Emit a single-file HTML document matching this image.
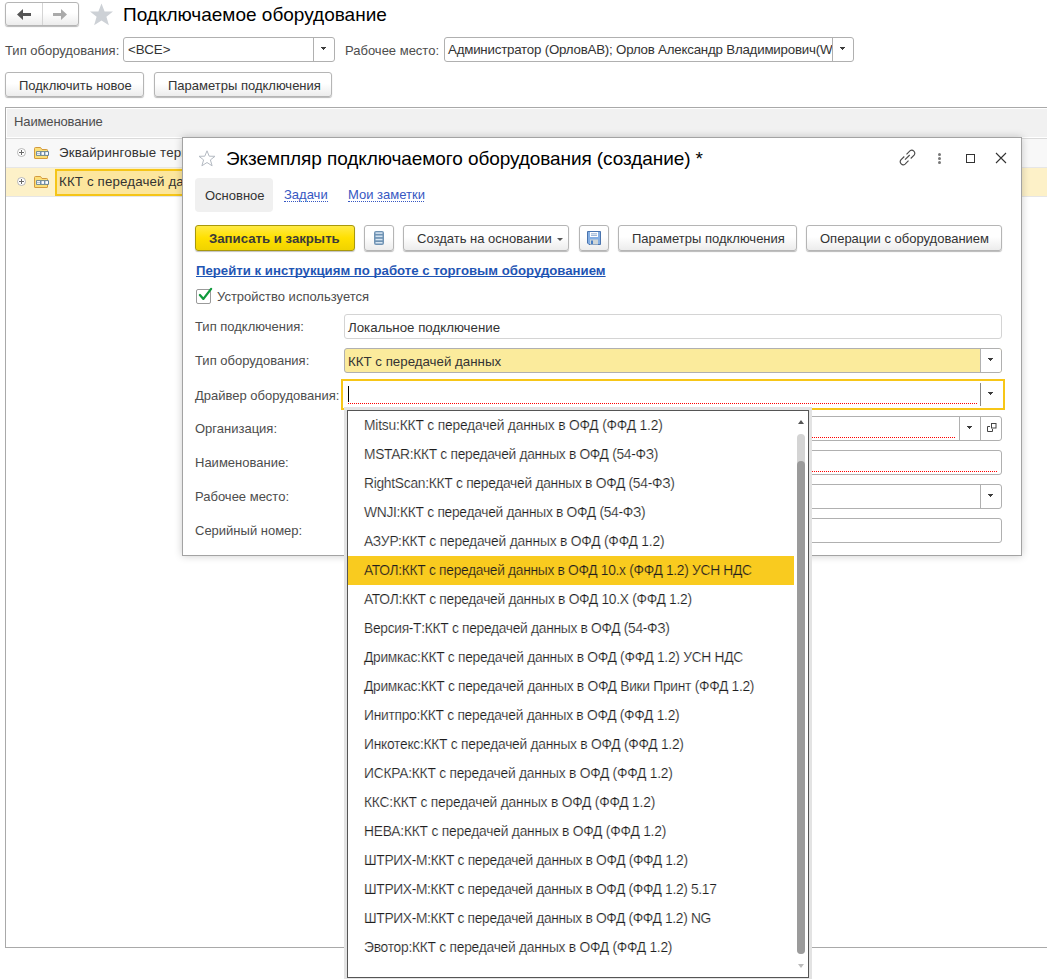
<!DOCTYPE html>
<html><head><meta charset="utf-8">
<style>
*{box-sizing:border-box;margin:0;padding:0}
html,body{width:1047px;height:979px;overflow:hidden;background:#fff;font-family:"Liberation Sans",sans-serif;color:#4d4d4d}
.a{position:absolute}
.t{position:absolute;white-space:nowrap;line-height:1}
.btn{position:absolute;border:1px solid #b5b5b5;border-radius:3px;background:linear-gradient(#fff 0%,#fff 45%,#ececec 100%);box-shadow:0 1px 1px rgba(0,0,0,.28)}
.fld{position:absolute;border:1px solid #b0b0b0;border-radius:3px;background:#fff}
.sep{position:absolute;top:0;bottom:0;width:1px;background:#b0b0b0}
.tri{position:absolute;width:0;height:0;border-left:4px solid transparent;border-right:4px solid transparent;border-top:4px solid #444}
.lbl{font-size:13px;color:#4d4d4d}
.bt{font-size:13px;color:#333}
.li{font-size:13.8px;letter-spacing:-0.2px;color:#1e1e1e;-webkit-text-stroke:0.18px #fff}
</style></head><body>

<!-- ============ PAGE HEADER ============ -->
<div class="btn" style="left:5px;top:2px;width:74px;height:24px"></div>
<div class="a" style="left:42px;top:3px;width:1px;height:22px;background:#d4d4d4"></div>
<svg class="a" style="left:17px;top:9px" width="15" height="12" viewBox="0 0 15 12"><path d="M0 5.5 L6 0 V4 H14 V7 H6 V11 Z" fill="#555"/></svg>
<svg class="a" style="left:53px;top:9px" width="15" height="12" viewBox="0 0 15 12"><path d="M14 5.5 L8 0 V4 H0 V7 H8 V11 Z" fill="#aaa"/></svg>

<svg class="a" style="left:89px;top:3px" width="25" height="23" viewBox="0 0 25 23"><polygon points="12.5,0.5 15.6,8.4 24,8.6 17.4,13.8 19.9,22.3 12.5,17.5 5.1,22.3 7.6,13.8 1,8.6 9.4,8.4" fill="#cdd1d6"/></svg>
<div class="t" style="left:123px;top:5px;font-size:19px;color:#000">Подключаемое оборудование</div>

<!-- filter row -->
<div class="t lbl" style="left:5px;top:44px">Тип оборудования:</div>
<div class="fld" style="left:123px;top:37px;width:212px;height:25px">
  <div class="t" style="left:4px;top:5px;font-size:13.3px;color:#333">&lt;ВСЕ&gt;</div>
  <div class="sep" style="left:189px"></div>
  <svg class="a" style="left:197px;top:9px" width="5" height="3" viewBox="0 0 5 3"><path d="M0 0H5V1H4V2H3V3H2V2H1V1H0Z" fill="#3c3c3c"/></svg>
</div>

<div class="t lbl" style="left:345px;top:44px">Рабочее место:</div>
<div class="fld" style="left:444px;top:37px;width:410px;height:25px;overflow:hidden">
  <div class="a" style="left:0;top:0;width:387px;height:23px;overflow:hidden">
    <div class="t" style="left:3px;top:5px;font-size:13.3px;letter-spacing:-0.21px;color:#333">Администратор (ОрловАВ); Орлов Александр Владимирович(WS)</div>
  </div>
  <div class="sep" style="left:387px"></div>
  <svg class="a" style="left:395px;top:9px" width="5" height="3" viewBox="0 0 5 3"><path d="M0 0H5V1H4V2H3V3H2V2H1V1H0Z" fill="#3c3c3c"/></svg>
</div>

<!-- buttons row -->
<div class="btn" style="left:5px;top:72px;width:139px;height:25px"><div class="t bt" style="left:13px;top:6px">Подключить новое</div></div>
<div class="btn" style="left:154px;top:72px;width:178px;height:25px"><div class="t bt" style="left:13px;top:6px">Параметры подключения</div></div>

<!-- ============ TABLE ============ -->
<div class="a" style="left:5px;top:107px;width:1100px;height:841px;border:1px solid #a9a9a9;background:#fff">
  <div class="a" style="left:1px;top:1px;width:1100px;height:28px;background:#f1f1f1"></div>
  <div class="a" style="left:0;top:30px;width:1100px;height:1px;background:#dadada"></div>
  <div class="t lbl" style="left:8px;top:7px;letter-spacing:-0.12px;color:#4d4d4d">Наименование</div>
  <!-- row1 -->
  <div class="a" style="left:0;top:31px;width:1100px;height:28px;background:#f8f8f8"></div>
  <div class="a" style="left:0;top:59px;width:1100px;height:1px;background:#e6e6e6"></div>
  <!-- row2 -->
  <div class="a" style="left:0;top:60px;width:1100px;height:28px;background:#fdf1c8"></div>
  <div class="a" style="left:0;top:88px;width:1100px;height:1px;background:#e6e6e6"></div>
  <div class="a" style="left:49px;top:61px;width:200px;height:27px;border:2px solid #f5c518;background:#fce69d"></div>
  <div class="t" style="left:53px;top:38px;font-size:13.3px;letter-spacing:0.15px;color:#333">Эквайринговые терминалы</div>
  <div class="t" style="left:53px;top:67px;font-size:13.3px;letter-spacing:0.15px;color:#333">ККТ с передачей данных</div>
</div>
<!-- plus icons and folders -->
<svg class="a" style="left:17px;top:148px" width="10" height="10" viewBox="0 0 10 10"><circle cx="4.5" cy="4.5" r="4" fill="#fff" stroke="#b0b0b0" stroke-width="0.9"/><path d="M2 4.5H7M4.5 2V7" stroke="#6a6a6a" stroke-width="1"/></svg>
<svg class="a" style="left:17px;top:177px" width="10" height="10" viewBox="0 0 10 10"><circle cx="4.5" cy="4.5" r="4" fill="#fff" stroke="#b0b0b0" stroke-width="0.9"/><path d="M2 4.5H7M4.5 2V7" stroke="#6a6a6a" stroke-width="1"/></svg>
<svg class="a" style="left:34px;top:146px" width="16" height="14" viewBox="0 0 16 14"><path d="M0.5 12V2.5Q0.5 1.5 1.5 1.5H6.5L8 3.5H12.7Q13.5 3.5 13.5 4.3V12Q13.5 12.5 13 12.5H1Q0.5 12.5 0.5 12Z" fill="#fbdf78" stroke="#d39a3e"/><rect x="2" y="5.3" width="13" height="4.4" rx="0.8" fill="#4f7599"/><rect x="2.8" y="6.1" width="3.4" height="2.8" fill="#fff"/><rect x="7.4" y="6.1" width="2.8" height="2.8" fill="#fff"/><rect x="11.3" y="6.1" width="2.8" height="2.8" fill="#fff"/><path d="M3 7.5H6" stroke="#7e9bb8" stroke-width="0.6"/></svg>
<svg class="a" style="left:34px;top:175px" width="16" height="14" viewBox="0 0 16 14"><path d="M0.5 12V2.5Q0.5 1.5 1.5 1.5H6.5L8 3.5H12.7Q13.5 3.5 13.5 4.3V12Q13.5 12.5 13 12.5H1Q0.5 12.5 0.5 12Z" fill="#fbdf78" stroke="#d39a3e"/><rect x="2" y="5.3" width="13" height="4.4" rx="0.8" fill="#4f7599"/><rect x="2.8" y="6.1" width="3.4" height="2.8" fill="#fff"/><rect x="7.4" y="6.1" width="2.8" height="2.8" fill="#fff"/><rect x="11.3" y="6.1" width="2.8" height="2.8" fill="#fff"/><path d="M3 7.5H6" stroke="#7e9bb8" stroke-width="0.6"/></svg>

<!-- ============ DIALOG ============ -->
<div class="a" style="left:182px;top:137px;width:840px;height:419px;border:1px solid #a3a3a3;background:#fff;box-shadow:0 0 8px rgba(0,0,0,.2)"></div>
<svg class="a" style="left:198px;top:150px" width="18" height="17" viewBox="0 0 18 17"><polygon points="9,0.8 11.2,6.2 17,6.3 12.4,9.9 14.1,15.8 9,12.5 3.9,15.8 5.6,9.9 1,6.3 6.8,6.2" fill="none" stroke="#b4bac2" stroke-width="1"/></svg>
<div class="t" style="left:226px;top:149px;font-size:19px;letter-spacing:-0.08px;color:#000">Экземпляр подключаемого оборудования (создание) *</div>
<!-- header icons -->
<svg class="a" style="left:899px;top:149px" width="17" height="17" viewBox="0 0 17 17"><g fill="none" stroke="#4a4a4a" stroke-width="1.15"><path d="M7.5 5.3L10.9 1.9A3 3 0 0 1 15.1 6.1L11.7 9.5"/><path d="M5.3 7.5L1.9 10.9A3 3 0 0 0 6.1 15.1L9.5 11.7"/><path d="M6 10.7L10.7 6"/></g></svg>
<div class="a" style="left:938px;top:153px;width:3px;height:3px;border-radius:50%;background:#777"></div>
<div class="a" style="left:938px;top:157px;width:3px;height:3px;border-radius:50%;background:#777"></div>
<div class="a" style="left:938px;top:161px;width:3px;height:3px;border-radius:50%;background:#777"></div>
<div class="a" style="left:966px;top:154px;width:9px;height:9px;border:1.5px solid #333"></div>
<svg class="a" style="left:995px;top:152px" width="12" height="12" viewBox="0 0 12 12"><path d="M1 1L11 11M11 1L1 11" stroke="#333" stroke-width="1.1"/></svg>

<!-- tabs -->
<div class="a" style="left:195px;top:178px;width:78px;height:34px;border-radius:4px;background:#f0f0f0"></div>
<div class="t" style="left:205px;top:189px;font-size:13px;color:#333">Основное</div>
<div class="t" style="left:284px;top:188px;font-size:13px;color:#3657c2">Задачи</div>
<div class="a" style="left:284px;top:201px;width:44px;border-top:1px dotted #3657c2"></div>
<div class="t" style="left:348px;top:188px;font-size:13px;color:#3657c2">Мои заметки</div>
<div class="a" style="left:348px;top:201px;width:76px;border-top:1px dotted #3657c2"></div>

<!-- command bar -->
<div class="a" style="left:195px;top:225px;width:160px;height:26px;border:1px solid #a8980c;border-radius:3px;background:linear-gradient(#ffea45 0%,#ffe000 50%,#f0d300 100%);box-shadow:0 1px 1px rgba(0,0,0,.25)"></div>
<div class="t" style="left:209px;top:232px;font-size:13.2px;font-weight:bold;color:#3a3a3a">Записать и закрыть</div>
<div class="btn" style="left:364px;top:225px;width:30px;height:26px"></div>
<svg class="a" style="left:374px;top:231px" width="10" height="14" viewBox="0 0 10 14"><rect x="0" y="0" width="10" height="14" rx="2" fill="#6f93b4"/><rect x="1.5" y="1.3" width="7" height="1.6" fill="#d2e2f0"/><rect x="1.5" y="4.5" width="7" height="1.6" fill="#d2e2f0"/><rect x="1.5" y="7.8" width="7" height="1.5" fill="#d8e6f2"/><rect x="1.5" y="11" width="7" height="1.5" fill="#d8e6f2"/></svg>
<div class="btn" style="left:403px;top:225px;width:166px;height:26px"></div>
<div class="t bt" style="left:417px;top:232px">Создать на основании</div>
<svg class="a" style="left:557px;top:238px" width="6" height="3" viewBox="0 0 6 3"><path d="M0 0H6L3 3Z" fill="#555"/></svg>
<div class="btn" style="left:579px;top:225px;width:30px;height:26px"></div>
<svg class="a" style="left:587px;top:231px" width="14" height="14" viewBox="0 0 14 14"><path d="M0.5 0.5H13.5V13.5H2L0.5 12Z" fill="#84aee2" stroke="#4a74ae"/><rect x="3" y="1" width="8" height="5" fill="#fff"/><path d="M4 2.8H10M4 4.4H10" stroke="#7a9cc8" stroke-width="0.8"/><rect x="3" y="8.5" width="8" height="5" fill="#d0d6d6"/><rect x="4" y="9.5" width="2" height="3.5" fill="#4a7fc4"/></svg>
<div class="btn" style="left:618px;top:225px;width:179px;height:26px"></div>
<div class="t bt" style="left:632px;top:232px">Параметры подключения</div>
<div class="btn" style="left:806px;top:225px;width:196px;height:26px"></div>
<div class="t bt" style="left:820px;top:232px">Операции с оборудованием</div>

<!-- link + checkbox -->
<div class="t" style="left:196px;top:264px;font-size:13.2px;font-weight:bold;color:#1f55b4;text-decoration:underline;text-decoration-skip-ink:none">Перейти к инструкциям по работе с торговым оборудованием</div>
<div class="a" style="left:196px;top:289px;width:15px;height:15px;border:1px solid #9a9a9a;border-radius:2px;background:#fff"></div>
<svg class="a" style="left:197px;top:286px" width="16" height="16" viewBox="0 0 16 16"><path d="M2.9 9L6.4 12.9L14.1 2.9" fill="none" stroke="#0f9a3c" stroke-width="2.3" stroke-linecap="round" stroke-linejoin="round"/></svg>
<div class="t lbl" style="left:217px;top:290px">Устройство используется</div>

<!-- labels -->
<div class="t lbl" style="left:195px;top:320px">Тип подключения:</div>
<div class="t lbl" style="left:195px;top:354px">Тип оборудования:</div>
<div class="t lbl" style="left:195px;top:389px">Драйвер оборудования:</div>
<div class="t lbl" style="left:195px;top:422px">Организация:</div>
<div class="t lbl" style="left:195px;top:456px">Наименование:</div>
<div class="t lbl" style="left:195px;top:490px">Рабочее место:</div>
<div class="t lbl" style="left:195px;top:524px">Серийный номер:</div>

<!-- fields -->
<div class="fld" style="left:344px;top:314px;width:658px;height:25px;border-color:#d4d4d4">
  <div class="t" style="left:3px;top:6px;font-size:13.3px;color:#333">Локальное подключение</div>
</div>
<div class="fld" style="left:344px;top:348px;width:658px;height:25px;background:#fbeb9c;overflow:hidden">
  <div class="t" style="left:3px;top:6px;font-size:13.3px;color:#333">ККТ с передачей данных</div>
  <div class="a" style="left:635px;top:0;width:22px;height:23px;background:#fff;border-left:1px solid #b0b0b0"></div>
  <svg class="a" style="left:643px;top:9px" width="5" height="3" viewBox="0 0 5 3"><path d="M0 0H5V1H4V2H3V3H2V2H1V1H0Z" fill="#3c3c3c"/></svg>
</div>
<div class="a" style="left:341px;top:379px;width:664px;height:31px;border:2px solid #f7c617;background:#fff"></div>
<div class="a" style="left:348px;top:386px;width:1px;height:16px;background:#000"></div>
<div class="a" style="left:348px;top:403px;width:629px;border-top:1px dotted #f00"></div>
<div class="a" style="left:980px;top:383px;width:1px;height:23px;background:#888"></div>
<svg class="a" style="left:988px;top:392px" width="5" height="3" viewBox="0 0 5 3"><path d="M0 0H5V1H4V2H3V3H2V2H1V1H0Z" fill="#3c3c3c"/></svg>

<div class="fld" style="left:344px;top:416px;width:658px;height:25px">
  <div class="a" style="left:4px;top:20px;width:606px;border-top:1px dotted #f00"></div>
  <div class="sep" style="left:614px"></div>
  <svg class="a" style="left:622px;top:9px" width="5" height="3" viewBox="0 0 5 3"><path d="M0 0H5V1H4V2H3V3H2V2H1V1H0Z" fill="#3c3c3c"/></svg>
  <div class="sep" style="left:635px"></div>
  <svg class="a" style="left:642px;top:6px" width="10" height="10" viewBox="0 0 10 10"><g fill="none" stroke="#444" stroke-width="1"><rect x="4.5" y="0.5" width="4.5" height="4.5"/><path d="M3 3.5H0.5V8.5H5.5V6"/></g></svg>
</div>
<div class="fld" style="left:344px;top:450px;width:658px;height:25px">
  <div class="a" style="left:4px;top:20px;width:648px;border-top:1px dotted #f00"></div>
</div>
<div class="fld" style="left:344px;top:484px;width:658px;height:25px">
  <div class="sep" style="left:635px"></div>
  <svg class="a" style="left:643px;top:9px" width="5" height="3" viewBox="0 0 5 3"><path d="M0 0H5V1H4V2H3V3H2V2H1V1H0Z" fill="#3c3c3c"/></svg>
</div>
<div class="fld" style="left:344px;top:518px;width:658px;height:25px"></div>
<!-- ============ POPUP ============ -->
<div class="a" style="left:347px;top:410px;width:462px;height:568px;border:1px solid #555;background:#fff;box-shadow:0 0 0 3px #e3e3e3"></div>
<div class="t li" style="left:364px;top:419px;letter-spacing:-0.184px">Mitsu:ККТ с передачей данных в ОФД (ФФД 1.2)</div>
<div class="t li" style="left:364px;top:448px;letter-spacing:-0.307px">MSTAR:ККТ с передачей данных в ОФД (54-ФЗ)</div>
<div class="t li" style="left:364px;top:477px;letter-spacing:-0.276px">RightScan:ККТ с передачей данных в ОФД (54-ФЗ)</div>
<div class="t li" style="left:364px;top:506px;letter-spacing:-0.293px">WNJI:ККТ с передачей данных в ОФД (54-ФЗ)</div>
<div class="t li" style="left:364px;top:535px;letter-spacing:-0.193px">АЗУР:ККТ с передачей данных в ОФД (ФФД 1.2)</div>
<div class="a" style="left:348px;top:556px;width:446px;height:29px;background:#f9cb1f"></div>
<div class="t li" style="left:364px;top:564px;letter-spacing:-0.305px;-webkit-text-stroke-color:#f9cb1f">АТОЛ:ККТ с передачей данных в ОФД 10.х (ФФД 1.2) УСН НДС</div>
<div class="t li" style="left:364px;top:593px;letter-spacing:-0.287px">АТОЛ:ККТ с передачей данных в ОФД 10.Х (ФФД 1.2)</div>
<div class="t li" style="left:364px;top:622px;letter-spacing:-0.302px">Версия-Т:ККТ с передачей данных в ОФД (54-ФЗ)</div>
<div class="t li" style="left:364px;top:651px;letter-spacing:-0.287px">Дримкас:ККТ с передачей данных в ОФД (ФФД 1.2) УСН НДС</div>
<div class="t li" style="left:364px;top:680px;letter-spacing:-0.284px">Дримкас:ККТ с передачей данных в ОФД Вики Принт (ФФД 1.2)</div>
<div class="t li" style="left:364px;top:709px;letter-spacing:-0.276px">Инитпро:ККТ с передачей данных в ОФД (ФФД 1.2)</div>
<div class="t li" style="left:364px;top:738px;letter-spacing:-0.257px">Инкотекс:ККТ с передачей данных в ОФД (ФФД 1.2)</div>
<div class="t li" style="left:364px;top:767px;letter-spacing:-0.240px">ИСКРА:ККТ с передачей данных в ОФД (ФФД 1.2)</div>
<div class="t li" style="left:364px;top:796px;letter-spacing:-0.202px">ККС:ККТ с передачей данных в ОФД (ФФД 1.2)</div>
<div class="t li" style="left:364px;top:825px;letter-spacing:-0.202px">НЕВА:ККТ с передачей данных в ОФД (ФФД 1.2)</div>
<div class="t li" style="left:364px;top:854px;letter-spacing:-0.336px">ШТРИХ-М:ККТ с передачей данных в ОФД (ФФД 1.2)</div>
<div class="t li" style="left:364px;top:883px;letter-spacing:-0.340px">ШТРИХ-М:ККТ с передачей данных в ОФД (ФФД 1.2) 5.17</div>
<div class="t li" style="left:364px;top:912px;letter-spacing:-0.342px">ШТРИХ-М:ККТ с передачей данных в ОФД (ФФД 1.2) NG</div>
<div class="t li" style="left:364px;top:941px;letter-spacing:-0.255px">Эвотор:ККТ с передачей данных в ОФД (ФФД 1.2)</div>
<div class="a" style="left:798px;top:420px;width:0;height:0;border-left:3px solid transparent;border-right:3px solid transparent;border-bottom:4px solid #555"></div>
<div class="a" style="left:797px;top:434px;width:8px;height:520px;border-radius:4px;background:#d4d4d4"></div>
<div class="a" style="left:797px;top:461px;width:8px;height:493px;border-radius:4px;background:#9b9b9b"></div>
<div class="a" style="left:798px;top:964px;width:0;height:0;border-left:3px solid transparent;border-right:3px solid transparent;border-top:4px solid #bbb"></div>
</body></html>
